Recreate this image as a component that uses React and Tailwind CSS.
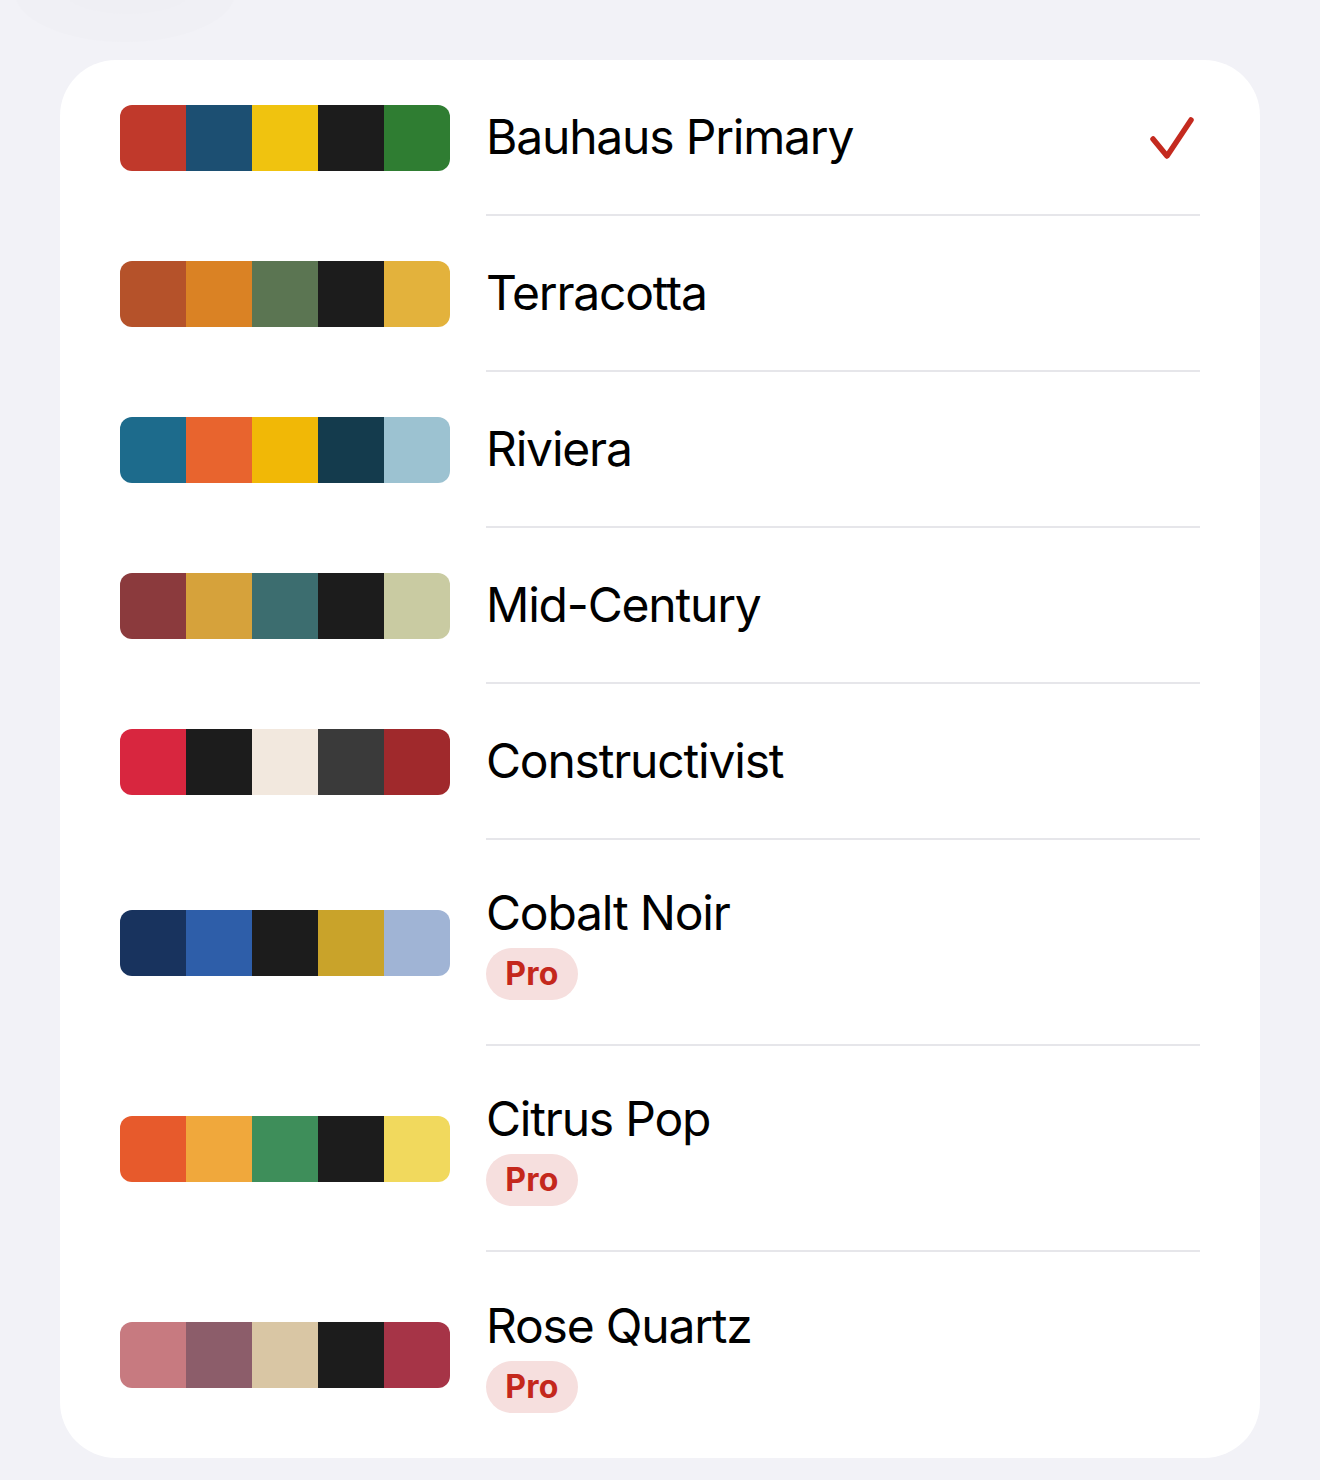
import React from "react";

const palettes = [
  { name: "Bauhaus Primary", colors: ["#c0392b", "#1c4f72", "#f0c30f", "#1c1c1c", "#2f7d32"], selected: true },
  { name: "Terracotta", colors: ["#b5522a", "#da8224", "#5b7552", "#1c1c1c", "#e3b23c"] },
  { name: "Riviera", colors: ["#1d6b8c", "#e8642e", "#f1b806", "#143b4d", "#9cc2d1"] },
  { name: "Mid-Century", colors: ["#8b3a3d", "#d6a23b", "#3c6d6f", "#1c1c1c", "#c9cba2"] },
  { name: "Constructivist", colors: ["#d8263f", "#1c1c1c", "#f2e8de", "#3a3a3a", "#a0292c"] },
  { name: "Cobalt Noir", colors: ["#18335e", "#2e5ea9", "#1c1c1c", "#c9a32a", "#a0b4d5"], pro: true },
  { name: "Citrus Pop", colors: ["#e75a2c", "#f0a83c", "#3e8e5a", "#1c1c1c", "#f1d95d"], pro: true },
  { name: "Rose Quartz", colors: ["#c77a80", "#8c5d6a", "#d9c6a4", "#1c1c1c", "#a63447"], pro: true },
];

function Swatch({ colors }) {
  return (
    <div className="flex h-[66px] w-[330px] shrink-0 overflow-hidden rounded-[12px]">
      {colors.map((c, i) => (
        <div key={i} className="h-full flex-1" style={{ backgroundColor: c }} />
      ))}
    </div>
  );
}

function Check() {
  return (
    <svg width="48" height="48" viewBox="0 0 48 48" fill="none" className="shrink-0">
      <path
        d="M5 26 L19 43 L43 7"
        stroke="#c42a1f"
        strokeWidth="5.5"
        strokeLinecap="round"
        strokeLinejoin="round"
      />
    </svg>
  );
}

export default function App() {
  return (
    <div
      className="relative min-h-[1480px] w-full overflow-hidden bg-[#f2f2f7] pt-[60px]"
      style={{ fontFamily: "Inter, 'Noto Sans', sans-serif" }}
    >
      <div className="pointer-events-none absolute left-[15px] top-[-58px] h-[100px] w-[220px] rounded-[50%] bg-[#f0f0f5]" />
      <div className="pointer-events-none absolute left-[65px] top-[-30px] h-[44px] w-[125px] rounded-[50%] bg-[#efeff4]" />
      <div className="relative mx-[60px] rounded-[56px] bg-white px-[60px]">
        {palettes.map((p, i) => {
          const last = i === palettes.length - 1;
          const h = p.pro ? "h-[206px]" : "h-[156px]";
          return (
            <div key={p.name} className={`flex ${h} items-center gap-[36px]`}>
              <Swatch colors={p.colors} />
              <div
                className={`flex h-full flex-1 items-center justify-between ${
                  last ? "" : "border-b-2 border-[#e6e6ea]"
                }`}
              >
                <div className="flex flex-col items-start gap-[6px]">
                  <div className="text-[48px] leading-[58px] tracking-[-1.2px] text-black">{p.name}</div>
                  {p.pro && (
                    <div className="flex h-[52px] w-[92px] items-center justify-center rounded-full bg-[#f6dfde] text-[32px] font-bold leading-none tracking-[0.3px] text-[#c4281c]">
                      Pro
                    </div>
                  )}
                </div>
                {p.selected && (
                  <div className="mr-[4px] flex items-center">
                    <Check />
                  </div>
                )}
              </div>
            </div>
          );
        })}
      </div>
    </div>
  );
}
